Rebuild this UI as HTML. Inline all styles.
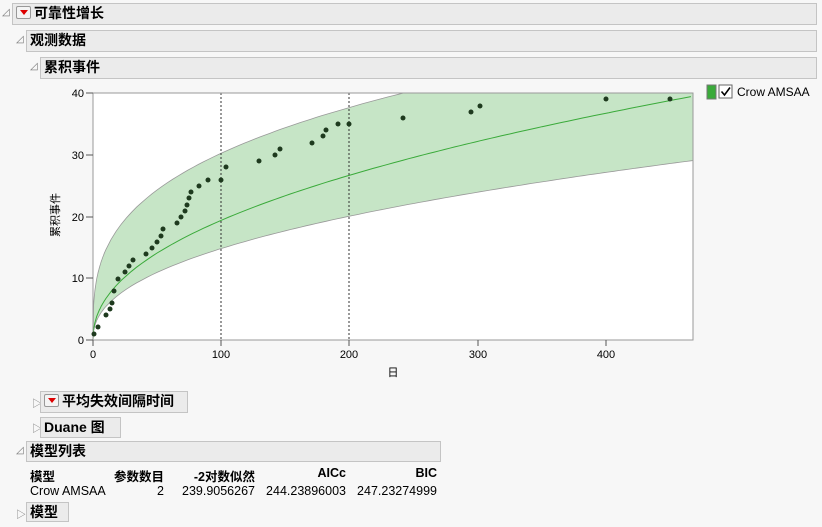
<!DOCTYPE html>
<html><head><meta charset="utf-8"><style>
body{margin:0;width:822px;height:527px;background:#f7f7f7;font-family:"Liberation Sans","Noto Sans CJK SC",sans-serif;position:relative;overflow:hidden}
.h{position:absolute;background:#ebebeb;border:1px solid #c4c4c4;box-sizing:border-box;font-weight:bold;font-size:14px;color:#000;line-height:19px;padding-left:3px}
.tri{position:absolute;font-size:10px;color:#777}
.dd{display:inline-block;width:13px;height:11px;border:1px solid #999;border-radius:2px;background:#f4f4f4;vertical-align:-1px;margin-right:3px;position:relative}
.dd:after{content:"";position:absolute;left:3px;top:3px;border-left:4px solid transparent;border-right:4px solid transparent;border-top:5px solid #d00}
.tb{position:absolute;font-size:12.5px;text-align:right}
.tb.l{text-align:left}
</style></head><body>
<div class="tri" style="left:2px;top:7px">◿</div>
<div class="h" style="left:12px;top:3px;width:805px;height:22px"><span class="dd"></span>可靠性增长</div>
<div class="tri" style="left:16px;top:34px">◿</div>
<div class="h" style="left:26px;top:30px;width:791px;height:22px">观测数据</div>
<div class="tri" style="left:30px;top:61px">◿</div>
<div class="h" style="left:40px;top:57px;width:777px;height:22px">累积事件</div>

<svg style="position:absolute;left:0;top:0" width="822" height="390">
<rect x="93" y="93" width="600" height="247" fill="#fff" stroke="#999"/>
<path id="band" fill="#c6e5c6" stroke="#999" stroke-width="0.8"/>
<path id="fit" fill="none" stroke="#3aaa3a" stroke-width="1"/>
<line x1="221" y1="93" x2="221" y2="340" stroke="#333" stroke-dasharray="2,2"/>
<line x1="349" y1="93" x2="349" y2="340" stroke="#333" stroke-dasharray="2,2"/>
<rect x="93" y="93" width="600" height="247" fill="none" stroke="#999"/>
<g id="pts" fill="#1e3a1e"></g>
<g font-size="11" fill="#000" text-anchor="end">
<text x="84" y="97">40</text><text x="84" y="159">30</text><text x="84" y="221">20</text><text x="84" y="282">10</text><text x="84" y="344">0</text>
</g>
<g stroke="#555"><line x1="86" y1="93" x2="93" y2="93"/><line x1="86" y1="155" x2="93" y2="155"/><line x1="86" y1="217" x2="93" y2="217"/><line x1="86" y1="278" x2="93" y2="278"/><line x1="86" y1="340" x2="93" y2="340"/>
<line x1="93" y1="340" x2="93" y2="346"/><line x1="221" y1="340" x2="221" y2="346"/><line x1="349" y1="340" x2="349" y2="346"/><line x1="478" y1="340" x2="478" y2="346"/><line x1="606" y1="340" x2="606" y2="346"/></g>
<g font-size="11" fill="#000" text-anchor="middle">
<text x="93" y="358">0</text><text x="221" y="358">100</text><text x="349" y="358">200</text><text x="478" y="358">300</text><text x="606" y="358">400</text>
<text x="393" y="376">日</text>
<text transform="translate(59,215) rotate(-90)">累积事件</text>
</g>
<rect x="707" y="85" width="9" height="14" fill="#3aaa3a" stroke="#777"/>
<rect x="719" y="85" width="13" height="13" fill="#fff" stroke="#666"/>
<path d="M721.5 91.5 L724.5 95 L730 87.5" fill="none" stroke="#000" stroke-width="1.6"/>
<text x="737" y="96" font-size="12" fill="#000">Crow AMSAA</text>
</svg>

<div class="tri" style="left:32px;top:395px">▷</div>
<div class="h" style="left:40px;top:391px;width:148px;height:22px"><span class="dd"></span>平均失效间隔时间</div>
<div class="tri" style="left:32px;top:420px">▷</div>
<div class="h" style="left:40px;top:417px;width:81px;height:21px">Duane 图</div>
<div class="tri" style="left:16px;top:445px">◿</div>
<div class="h" style="left:26px;top:441px;width:415px;height:21px">模型列表</div>
<div class="tb l" style="left:30px;top:466px;font-weight:bold">模型</div>
<div class="tb" style="left:100px;width:64px;top:466px;font-weight:bold">参数数目</div>
<div class="tb" style="left:170px;width:85px;top:466px;font-weight:bold">-2对数似然</div>
<div class="tb" style="left:260px;width:86px;top:466px;font-weight:bold">AICc</div>
<div class="tb" style="left:350px;width:87px;top:466px;font-weight:bold">BIC</div>
<div class="tb l" style="left:30px;top:484px">Crow AMSAA</div>
<div class="tb" style="left:100px;width:64px;top:484px">2</div>
<div class="tb" style="left:170px;width:85px;top:484px">239.9056267</div>
<div class="tb" style="left:258px;width:88px;top:484px">244.23896003</div>
<div class="tb" style="left:348px;width:89px;top:484px">247.23274999</div>
<div class="tri" style="left:16px;top:506px">▷</div>
<div class="h" style="left:26px;top:502px;width:43px;height:20px">模型</div>

<script>
var X=t=>93+t*1.283,Y=v=>340-v*6.175;
var up=[],lo=[],f=[];
for(var t=0.5;t<=467.7;t+=(t<10?0.5:4)){
 var u=Math.min(40,7.06*Math.pow(t,0.316));up.push(X(t).toFixed(1)+" "+Y(u).toFixed(1));
 lo.push(X(t).toFixed(1)+" "+Y(1.98*Math.pow(t,0.437)).toFixed(1));
 f.push(X(t).toFixed(1)+" "+Y(2.32*Math.pow(t,0.461)).toFixed(1));}
up.push("693 93");lo.push(X(467.7).toFixed(1)+" "+Y(1.98*Math.pow(467.7,0.437)).toFixed(1));
document.getElementById("band").setAttribute("d","M93 340 L"+up.join(" L")+" L"+lo.reverse().join(" L")+" Z");
document.getElementById("fit").setAttribute("d","M93 340 L"+f.join(" L"));
var p=[[94,334],[98,327],[106,315],[110,309],[112,303],[114,291],[118,279],[125,272],[129,266],[133,260],[146,254],[152,248],[157,242],[161,236],[163,229],[177,223],[181,217],[185,211],[187,205],[189,198],[191,192],[199,186],[208,180],[221,180],[226,167],[259,161],[275,155],[280,149],[312,143],[323,136],[326,130],[338,124],[349,124],[403,118],[471,112],[480,106],[606,99],[670,99]];
var g=document.getElementById("pts"),s="";
p.forEach(a=>s+='<circle cx="'+a[0]+'" cy="'+a[1]+'" r="2.5"/>');g.innerHTML=s;
</script>
</body></html>
